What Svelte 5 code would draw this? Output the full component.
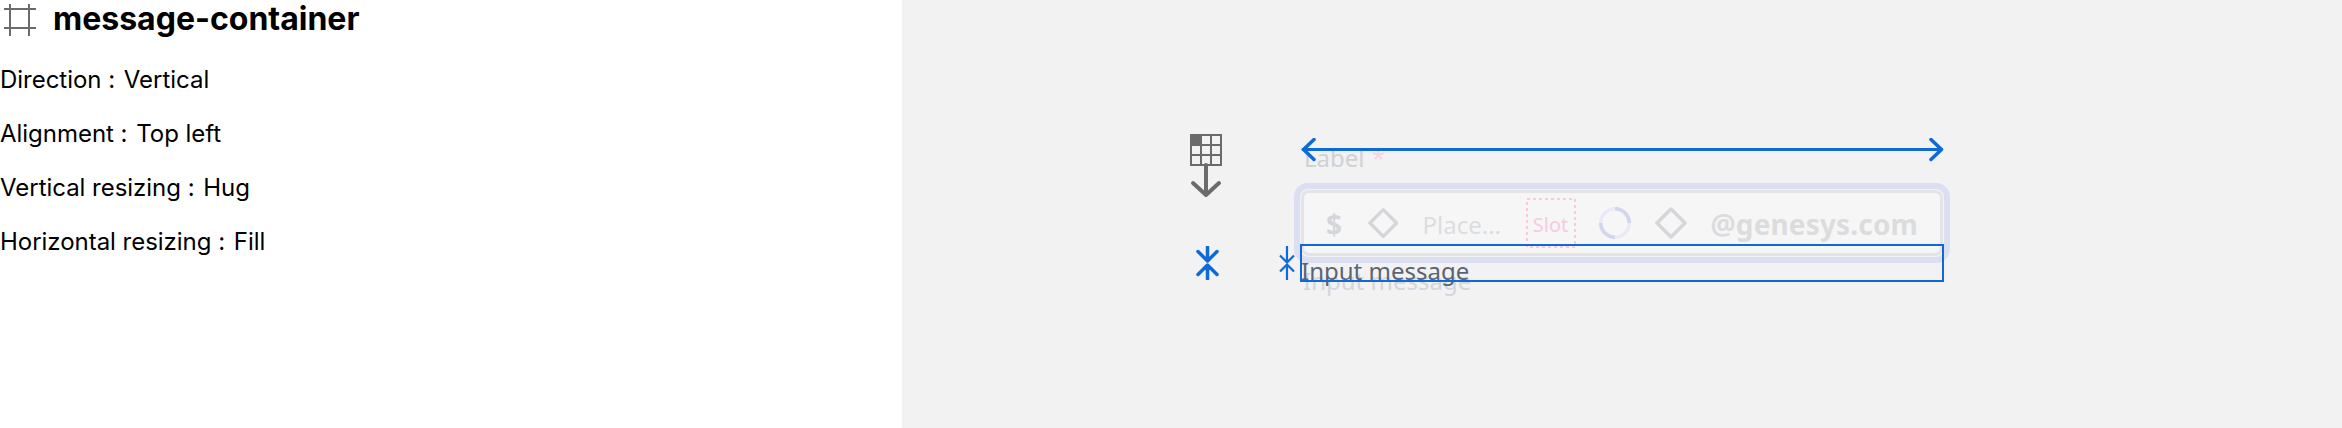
<script>
  const rows = [
    ['Direction', 'Vertical'],
    ['Alignment', 'Top left'],
    ['Vertical resizing', 'Hug'],
    ['Horizontal resizing', 'Fill']
  ];
</script>

<div class="page">
  <aside class="panel">
    <header class="title">
      <svg class="frame" width="34" height="34" viewBox="0 0 34 34" fill="none" stroke="#6b6b6b" stroke-width="2">
        <path d="M7 2V34M26 2V34M1 7H33M1 26H33" />
      </svg>
      <h1>message-container</h1>
    </header>
    <ul>
      {#each rows as [k, v]}
        <li>{k} : <span class="v">{v}</span></li>
      {/each}
    </ul>
  </aside>

  <main class="canvas">
    <div class="field">
      <div class="label">Label <span class="req">*</span></div>
      <div class="ring">
        <div class="input">
          <span class="prefix">$</span>
          <svg class="diamond" width="32" height="32" viewBox="0 0 32 32" fill="none" stroke="#d4d6d9" stroke-width="3.500"><path d="M16 2 30 16 16 30 2 16Z" stroke-linejoin="round"/></svg>
          <span class="place">Place...</span>
          <span class="slot">
            <svg class="dash" width="50" height="50" viewBox="0 0 50 50" fill="none" stroke="#f8c9e0" stroke-width="2" stroke-dasharray="3 3"><rect x="1" y="1" width="48" height="48"/></svg>
            Slot
          </span>
          <svg class="spinner" width="32" height="32" viewBox="0 0 32 32" fill="none" stroke-width="3.500">
            <circle cx="16" cy="16" r="14.250" stroke="#e9eaf6"/>
            <path d="M16 1.750A14.250 14.250 0 0 1 30.250 16M16 30.250A14.250 14.250 0 0 1 1.750 16" stroke="#d2d5ed"/>
          </svg>
          <svg class="diamond" width="32" height="32" viewBox="0 0 32 32" fill="none" stroke="#d4d6d9" stroke-width="3.500"><path d="M16 2 30 16 16 30 2 16Z" stroke-linejoin="round"/></svg>
          <span class="suffix">@genesys.com</span>
        </div>
      </div>
      <div class="msg">Input message</div>
    </div>

    <div class="overlay msg-solid">Input message</div>
    <div class="overlay selection"></div>

    <svg class="overlay hug" width="24" height="34" viewBox="0 0 24 34" fill="none" stroke="#0f6ad8" stroke-width="3.500" stroke-linecap="round" stroke-linejoin="round">
      <path d="M11.500 1V15M11.500 19V33M2 5.500 11.500 15 21 5.500M2 28.500 11.500 19 21 28.500"/>
    </svg>
    <svg class="overlay gap" width="16" height="34" viewBox="0 0 16 34" fill="none" stroke="#0f6ad8" stroke-width="2.200">
      <path d="M8 0V16.500M8 18.500V34M1 9.500 8 16.500 15 9.500M1 25.500 8 18.500 15 25.500"/>
    </svg>
    <svg class="overlay fill-arrow" width="646" height="24" viewBox="0 0 646 24" fill="none" stroke="#0f6ad8" stroke-linecap="round" stroke-linejoin="round">
      <path d="M3 11.500H641" stroke-width="3"/>
      <path d="M14 1.500 3.500 11.500 14 21.500M631 1.500 641.500 11.500 631 21.500" stroke-width="3.500"/>
    </svg>
    <svg class="overlay align" width="32" height="64" viewBox="0 0 32 64" fill="none" stroke="#6b6b6b">
      <rect x="0" y="0" width="12" height="12" fill="#6b6b6b" stroke="none"/>
      <path d="M1 1H31V31H1ZM11 1V31M21 1V31M1 11H31M1 21H31" stroke-width="2"/>
      <path d="M16 31V61M3 49 16 61 29 49" stroke-width="4" stroke-linecap="round" stroke-linejoin="round"/>
    </svg>
  </main>
</div>

<style>
  :global(body) { margin: 0; }
  .page { display: flex; width: 2342px; height: 428px; overflow: hidden; background: #fff; }
  .panel { width: 902px; flex: none; font-family: Inter, sans-serif; color: #000; }
  .title { display: flex; align-items: center; gap: 16px; height: 38px; }
  .frame { flex: none; margin-left: 3px; }
  h1 { margin: 0; font-size: 32px; font-weight: 700; line-height: 38px; }
  ul { list-style: none; margin: 27px 0 0; padding: 0; display: flex; flex-direction: column; gap: 25px; }
  li { font-size: 24px; line-height: 29px; letter-spacing: -0.03px; }
  .v { margin-left: 2px; }

  .canvas { position: relative; flex: 1; background: #f2f2f2; font-family: "Noto Sans", sans-serif; }
  .field { position: absolute; left: 392px; top: 142px; width: 656px; }
  .label { margin-left: 10px; font-size: 24px; line-height: 32px; color: #cfd1d5; height: 41px; }
  .req { color: #f7d3e3; margin-left: 1px; }
  .ring { border: 6px solid #dcdef1; border-radius: 14px; padding: 1px; }
  .input { display: flex; align-items: center; height: 60px; border: 3px solid #e4e4e6; border-radius: 8px; background: #f6f6f6; padding: 0 22px; }
  .prefix { font-size: 28px; font-weight: 700; color: #d4d6d9; width: 42px; flex: none; margin-top: 2px; }
  .place { font-size: 24px; color: #dcdde0; margin: 2px 0 0 24px; width: 79px; flex: none; }
  .slot { position: relative; width: 50px; height: 50px; flex: none; box-sizing: border-box; padding-top: 2px; color: #f8c9e0; font-size: 20px; display: flex; align-items: center; justify-content: center; margin-left: 24px; }
  .dash { position: absolute; inset: 0; }
  .spinner { margin-left: 23px; flex: none; }
  .input .spinner + .diamond { margin-left: 24px; flex: none; }
  .suffix { font-size: 28px; font-weight: 700; color: #dcdcde; margin: 2px 0 0 24px; flex: none; letter-spacing: 0.15px; }
  .msg { margin: 2px 0 0 9px; font-size: 24px; line-height: 32px; color: #d3d6dc; }

  .overlay { position: absolute; }
  .msg-solid { left: 399px; top: 255px; font-size: 24px; line-height: 32px; color: #5b6475; }
  .selection { left: 398px; top: 244px; width: 644px; height: 38px; box-sizing: border-box; border: 2px solid #0f6ad8; }
  .hug { left: 294px; top: 246px; }
  .gap { left: 377px; top: 246px; }
  .fill-arrow { left: 398px; top: 138px; }
  .align { left: 288px; top: 134px; }
</style>
